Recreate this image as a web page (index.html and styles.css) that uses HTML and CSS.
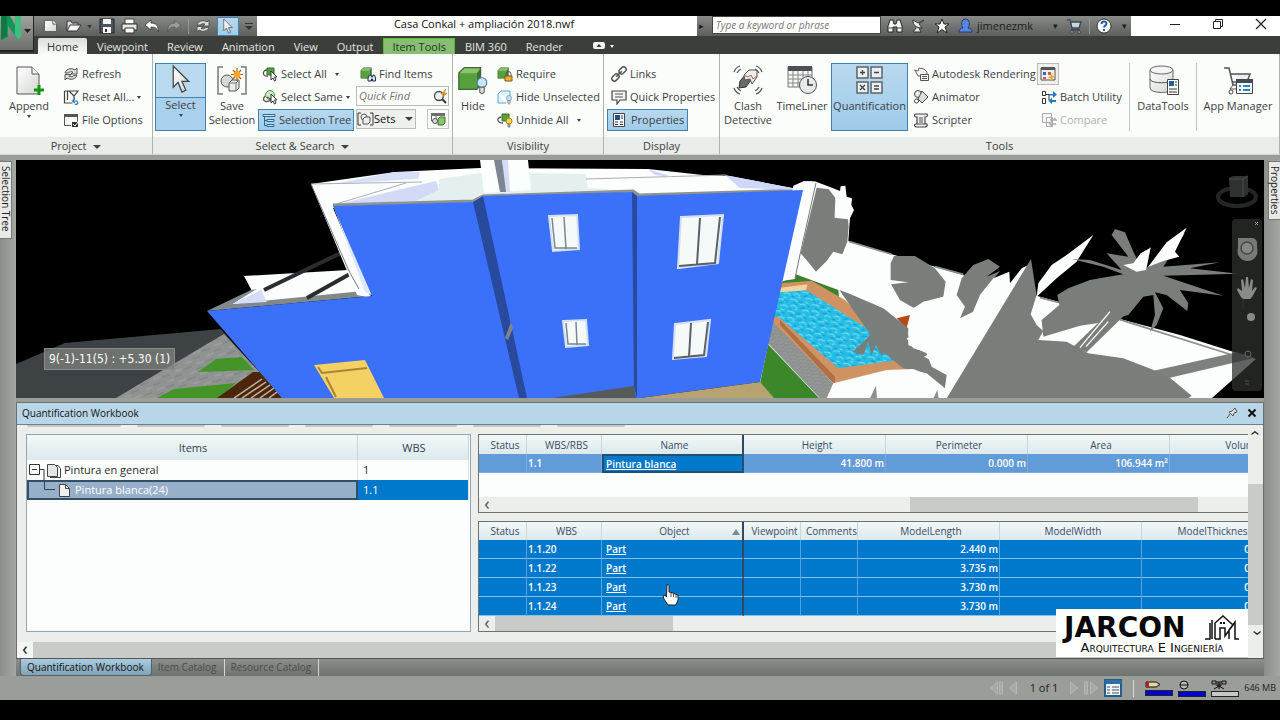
FILE: index.html
```html
<!DOCTYPE html>
<html lang="en">
<head>
<meta charset="utf-8">
<title>Casa Conkal + ampliación 2018.nwf</title>
<link rel="stylesheet" href="styles.css">
</head>
<body>
<svg class="defs" aria-hidden="true">
  <defs>
    <linearGradient id="gGreen" x1="0" y1="0" x2="1" y2="1"><stop offset="0" stop-color="#6fae4f"/><stop offset="1" stop-color="#4a9430"/></linearGradient>
    <linearGradient id="gPage" x1="0" y1="0" x2="1" y2="1"><stop offset="0" stop-color="#fff"/><stop offset="1" stop-color="#d3d6d3"/></linearGradient>
    <symbol id="refresh" viewBox="0 0 16 16"><path d="M2 7a6 5 0 0 1 10-3l2-2v6H8l2-2a4 3 0 0 0-5 1z M14 9a6 5 0 0 1-10 3l-2 2V8.500h6l-2 2a4 3 0 0 0 5-1z" fill="#dfe2df" stroke="#555" stroke-width="1"/></symbol>
    <symbol id="page" viewBox="0 0 16 16"><path d="M1.500 2.500h9l4 4v8h-13z" fill="url(#gPage)" stroke="#555"/><path d="M10.500 2.500v4h4" fill="#fff" stroke="#555"/></symbol>
    <symbol id="cube" viewBox="0 0 16 16"><path d="M1 5l3-3h9l-2 3z" fill="#8cc46c"/><path d="M1 5h10v9H1z" fill="#57a13c"/><path d="M11 5l2-3v9l-2 3z" fill="#39752a"/><path d="M1 5l3-3h9v9l-2 3H1z" fill="none" stroke="#42643a" stroke-width=".7"/></symbol>
    <symbol id="cursor" viewBox="0 0 20 32"><path d="M2 2v22l5-5 4 10 4-2-4-9h7z" fill="url(#gPage)" stroke="#444" stroke-width="1.300"/></symbol>
    <symbol id="cart" viewBox="0 0 16 16"><path d="M1 2h3l2 8h7l2-6H5M5 12h9" fill="#c9d4dc" stroke="#394957" stroke-width="1.400"/><circle cx="6" cy="14" r="1.300" fill="#eee" stroke="#333"/><circle cx="13" cy="14" r="1.300" fill="#eee" stroke="#333"/></symbol>
    <symbol id="bulb" viewBox="0 0 10 16"><circle cx="5" cy="5" r="4.300" fill="#c7e4f8" stroke="#4f81ab"/><path d="M3 9h4v4.500l-2 1.500-2-1.500z" fill="#ddd" stroke="#666"/></symbol>
    <pattern id="water" width="67" height="37" patternUnits="userSpaceOnUse" patternTransform="rotate(14)"><rect width="67" height="37" fill="#27bde4"/><path d="M0 6l15-3 9 5M30 14l14-4 12 5M5 24l13-3 9 5M44 30l12-4 9 4M46 3l10 2M20 33l9-3" stroke="#79e2f4" fill="none" stroke-width="3"/><path d="M12 13l12 4M36 24l13-3M50 12l12 2M3 32l9 2M28 4l11 2" stroke="#1197ca" fill="none" stroke-width="3"/></pattern>
    <pattern id="stone" width="23" height="11" patternUnits="userSpaceOnUse" patternTransform="rotate(-20)"><rect width="23" height="11" fill="#8f9391"/><path d="M0 3h9M12 7h8" stroke="#7a7f7c"/><path d="M4 9h7M14 2h8" stroke="#a5a8a5"/></pattern>
  </defs>
</svg>

<div class="app">
  <header class="top">
    <button class="logo" aria-label="Application menu"><svg width="34" height="35" viewBox="0 0 34 35"><path d="M1 0h9l5 9V0h6v21l-3 3L8 10v11l-7 3z" fill="#159557"/><path d="M1 0h6v20l-6 4z" fill="#0c7a43"/><path d="M15 0h6v21l-3 3-3-5z" fill="#3fbf7f"/><path d="M24 13h7l-3.500 4z" fill="#1d1f1d"/></svg></button>
    <div class="top-rows">
      <div class="titlebar">
        <div class="qat">
          <button aria-label="New"><svg width="17" height="16"><use href="#page" width="17" height="15"/></svg></button>
          <button aria-label="Open"><svg width="28" height="16" viewBox="0 0 28 16"><path d="M2 13V3h4l1 2h6v2" fill="#ddd" stroke="#333"/><path d="M2 13l3-6h11l-4 6z" fill="#f6f6f6" stroke="#333"/><path d="M22 7h5l-2.500 3z" fill="#333"/></svg></button>
          <button aria-label="Save"><svg width="16" height="16" viewBox="0 0 16 16"><path d="M1 1h14v14H1z" fill="#4b5560" stroke="#222"/><path d="M4 1h8v5H4zM4 9h8v6H4z" fill="#f4f4f4"/><path d="M6 11h2v3H6z" fill="#333"/></svg></button>
          <button aria-label="Print"><svg width="17" height="16" viewBox="0 0 17 16"><path d="M4 1h9v5H4z" fill="#fff" stroke="#444"/><path d="M1 6h15v6H1z" fill="#e8e8e8" stroke="#333"/><path d="M4 10h9v5H4z" fill="#fff" stroke="#333"/></svg></button>
          <button aria-label="Undo"><svg width="16" height="16" viewBox="0 0 16 16"><path d="M1 7l6-5v3c5 0 8 3 7 9-1-4-3-5-7-5v3z" fill="#fff" stroke="#333" stroke-width=".8"/></svg></button>
          <button aria-label="Redo"><svg width="16" height="16" viewBox="0 0 16 16"><path d="M15 7L9 2v3c-5 0-8 3-7 9 1-4 3-5 7-5v3z" fill="#999c99" stroke="#555" stroke-width=".8"/></svg></button>
          <i class="bar-sep"></i>
          <button aria-label="Refresh"><svg width="16" height="16"><use href="#refresh"/></svg></button>
          <button class="on" aria-label="Select"><svg width="12" height="17"><use href="#cursor"/></svg></button>
          <button aria-label="Customize"><svg width="8" height="16" viewBox="0 0 8 16"><path d="M0 5h8v1H0zM0 8h8l-4 4z" fill="#333"/></svg></button>
        </div>
        <h1>Casa Conkal + ampliación 2018.nwf</h1>
        <div class="info">
          <span class="arrow">▸</span>
          <input type="text" aria-label="Search help" placeholder="Type a keyword or phrase">
          <button aria-label="Search"><svg width="16" height="16" viewBox="0 0 16 16"><path d="M1 14V8l2-6h3l1 4h2l1-4h3l2 6v6h-5V9H6v5z" fill="#f4f4f4" stroke="#222"/><path d="M1.500 10h4M10.500 10h4" stroke="#444"/></svg></button>
          <button aria-label="Communication"><svg width="16" height="16" viewBox="0 0 16 16"><path d="M3 2c0 5 3 8 9 8l-3-4 5-4-6 3z" fill="#f4f4f4" stroke="#333"/><path d="M6 10l-3 4h8l-2-4" fill="#ddd" stroke="#333"/></svg></button>
          <button aria-label="Favorites"><svg width="16" height="16" viewBox="0 0 16 16"><path d="M8 1l2 5h5l-4 3 2 6-5-3.500L3 15l2-6-4-3h5z" fill="#fff" stroke="#222"/></svg></button>
          <button class="user"><svg width="15" height="16" viewBox="0 0 15 16"><path d="M1 14c0-3 2-4 4-4-2-3-2-9 2.500-9s4.500 6 2.500 9c2 0 4 1 4 4z" fill="#5b86dd" stroke="#1f3c80"/></svg>jimenezmk</button>
          <span class="arrow user-arrow">▾</span>
          <button aria-label="Store"><svg width="16" height="16"><use href="#cart"/></svg></button>
          <i class="bar-sep"></i>
          <button aria-label="Help"><svg width="16" height="16" viewBox="0 0 16 16"><circle cx="8" cy="8" r="7" fill="#fff" stroke="#333"/><path d="M5.500 6c0-3.500 5-3.300 5-.4 0 1.900-2.500 2-2.500 3.900M8 11v2" stroke="#1f5f9f" stroke-width="2" fill="none"/></svg></button>
          <span class="arrow">▾</span>
        </div>
        <div class="win">
          <button aria-label="Minimize"><svg width="12" height="12" viewBox="0 0 12 12"><path d="M1 6.500h10" stroke="#222"/></svg></button>
          <button aria-label="Restore"><svg width="12" height="12" viewBox="0 0 12 12"><path d="M1.500 3.500h7v7h-7zM3.500 3.500v-2h7v7h-2" fill="none" stroke="#222"/></svg></button>
          <button aria-label="Close"><svg width="12" height="12" viewBox="0 0 12 12"><path d="M1 1l10 10M11 1L1 11" stroke="#222" stroke-width="1.200"/></svg></button>
        </div>
      </div>
      <nav class="tabs">
        <button class="active">Home</button><button>Viewpoint</button><button>Review</button><button>Animation</button><button>View</button><button>Output</button><button class="context">Item Tools</button><button>BIM 360</button><button>Render</button>
        <button class="mini" aria-label="Minimize ribbon"><svg width="22" height="10" viewBox="0 0 22 10"><rect y="1" width="12" height="7" rx="2" fill="#f2f2f2"/><path d="M3.500 6h5L6 3z" fill="#333"/><path d="M17 4h4l-2 3z" fill="#eee"/></svg></button>
      </nav>
    </div>
  </header>

  <div class="ribbon">
    <section class="panel project">
      <div class="body">
        <button class="big w-append"><svg width="32" height="32" viewBox="0 0 32 32"><path d="M4 3h15l7 7v20H4z" fill="url(#gPage)" stroke="#555"/><path d="M19 3v7h7" fill="#fff" stroke="#555"/><path d="M21 26h10M26 21v10" stroke="#149414" stroke-width="3"/></svg><span>Append</span><b class="dd"></b></button>
        <div class="col c-project">
          <button><svg width="16" height="16"><use href="#refresh"/></svg>Refresh</button>
          <button><svg width="16" height="16" viewBox="0 0 16 16"><path d="M1.500 2v12h8M1.500 2h3v9M6 2h9l-4 5zM11 7v3" fill="none" stroke="#444" stroke-width="1.200"/><path d="M10 12h4c2 3-1 4-2 3M12 9.500L9.500 12l2.500 2" fill="none" stroke="#2579c0" stroke-width="1.200"/></svg>Reset All...<b class="dd"></b></button>
          <button><svg width="16" height="16" viewBox="0 0 16 16"><path d="M1.500 2.500h13v7M1.500 2.500v11H8" fill="#f4f4f4" stroke="#555"/><path d="M1 2h14v3H1z" fill="#555"/><path d="M9 10h6v5H9z" fill="#333"/><path d="M10 12l2 2 4-5" stroke="#fff" fill="none"/></svg>File Options</button>
        </div>
      </div>
      <h2>Project <b class="dd wide"></b></h2>
    </section>

    <section class="panel search">
      <div class="body">
        <button class="big on split w-select"><svg width="20" height="31"><use href="#cursor"/></svg><span>Select</span><b class="dd"></b></button>
        <button class="big w-save"><svg width="32" height="32" viewBox="0 0 32 32"><path d="M7 3H2v27h5M25 3h5v27h-5" fill="none" stroke="#777" stroke-width="1.500"/><circle cx="11" cy="17" r="6" fill="#d5d8d5" stroke="#555"/><path d="M13 19l3-3h7v8l-3 3h-7z" fill="#e8ece8" stroke="#555"/><path d="M13 19h7l3-3M20 19v8" fill="none" stroke="#777"/><path d="M21 4v13M15 10.500h12M17 6l8 9M25 6l-8 9" stroke="#b95c00" stroke-width="1.200"/><circle cx="21" cy="10.500" r="3.300" fill="#f6a623"/></svg><span>Save<br>Selection</span></button>
        <div class="col c-select">
          <button><svg width="16" height="16" viewBox="0 0 16 16"><path d="M5 2h7v7H5z" fill="#57a13c" stroke="#35702a"/><path d="M5 4c-5 0-5 7 1 6" fill="none" stroke="#555" stroke-width="1.300"/><path d="M9 5v9l2-2 1.500 3 1.500-1-1.500-3H15z" fill="#fff" stroke="#333"/></svg>Select All<b class="dd gap"></b></button>
          <button><svg width="16" height="16" viewBox="0 0 16 16"><circle cx="8" cy="6" r="4.500" fill="#cfe5c8" stroke="#4b9a38"/><path d="M3 7c-4 5 1 7 6 4M5 8l5 3" fill="none" stroke="#555" stroke-width="1.300"/><path d="M9 5v9l2-2 1.500 3 1.500-1-1.500-3H15z" fill="#fff" stroke="#333"/></svg>Select Same<b class="dd"></b></button>
          <button class="on"><svg width="16" height="16" viewBox="0 0 16 16"><path d="M2 2.500h12v2H2zM6 7.500h7v2H6zM6 12.500h7v2H6z" fill="#cfe6f5" stroke="#286a94"/><path d="M3.500 5v8.500H6M3.500 8.500H6" fill="none" stroke="#286a94"/></svg>Selection Tree</button>
        </div>
        <div class="col c-find">
          <button><svg width="16" height="16"><use href="#cube" width="14" height="14"/><path d="M8 15v-3l1.500-3H11l.5 2h1l.5-2h1.500l1 3v3h-3v-2h-1v2z" fill="#dbe7f3" stroke="#1c2f45"/></svg>Find Items</button>
          <div class="field"><input type="text" aria-label="Quick Find" placeholder="Quick Find"><svg width="16" height="16" viewBox="0 0 16 16"><circle cx="7" cy="8" r="4.500" fill="#e5f3f3" stroke="#444" stroke-width="1.300"/><path d="M10 11l4 4" stroke="#333" stroke-width="2"/><path d="M14 1l-5 5h3l-2 4 5-5h-3z" fill="#f7a81b" stroke="#b87510" stroke-width=".5"/></svg></div>
          <div class="sets"><label class="combo"><svg width="17" height="16" viewBox="0 0 17 16"><path d="M4 2H1v12h3M13 2h3v12h-3" fill="none" stroke="#333"/><circle cx="7" cy="6" r="3" fill="#eee" stroke="#555"/><path d="M6 8l2-2h5v5l-2 2H6z" fill="#eee" stroke="#555"/></svg><select aria-label="Sets"><option>Sets</option></select><b class="dd wide"></b></label><button class="mini-btn" aria-label="Manage sets"><svg width="16" height="16" viewBox="0 0 16 16"><path d="M1 2h14v3H1z" fill="#6a706a"/><path d="M1.500 5v5h6M6 5v8" fill="none" stroke="#666"/><path d="M8 8l2-2h5v6l-2 2H8z" fill="#8cc46c" stroke="#387529"/><circle cx="5" cy="10" r="2.500" fill="#ddd" stroke="#555"/></svg></button></div>
        </div>
      </div>
      <h2>Select &amp; Search <b class="dd wide"></b></h2>
    </section>

    <section class="panel visibility">
      <div class="body">
        <button class="big w-hide"><svg width="32" height="32" viewBox="0 0 32 32"><use href="#cube" width="29" height="29"/><use href="#bulb" x="19" y="13" width="12" height="18"/></svg><span>Hide</span></button>
        <div class="col c-vis">
          <button><svg width="16" height="16"><use href="#cube" width="14" height="14"/><path d="M9 10V8a2.500 2.500 0 0 1 5 0v2" fill="none" stroke="#555"/><path d="M8 10h7v5H8z" fill="#efae31" stroke="#85560b"/></svg>Require</button>
          <button><svg width="16" height="16" viewBox="0 0 16 16"><path d="M1 5l3-3h9v7M1 5v9h8" fill="#e2f3fb" stroke="#5ba7cf"/><use href="#bulb" x="9" y="6" width="6" height="10"/></svg>Hide Unselected</button>
          <button><svg width="16" height="16" viewBox="0 0 16 16"><path d="M5 2h7v7H5z" fill="#57a13c" stroke="#35702a"/><path d="M4 5c-5 1-4 6 2 6" fill="none" stroke="#555" stroke-width="1.300"/><circle cx="12" cy="9" r="3" fill="#fbd557" stroke="#b88412"/><path d="M11 12h2v3h-2z" fill="#bbb" stroke="#555" stroke-width=".6"/></svg>Unhide All<b class="dd gap"></b></button>
        </div>
      </div>
      <h2>Visibility</h2>
    </section>

    <section class="panel display">
      <div class="body">
        <div class="col c-disp">
          <button><svg width="16" height="16" viewBox="0 0 16 16"><g transform="rotate(-45 8 8)" fill="none" stroke="#555" stroke-width="1.500"><rect x="-1" y="5.500" width="8" height="5" rx="2.500"/><rect x="9" y="5.500" width="8" height="5" rx="2.500"/><path d="M4 8h8"/></g></svg>Links</button>
          <button><svg width="16" height="16" viewBox="0 0 16 16"><path d="M1 2h14v9H9l-3 4v-4H1z" fill="#f4f4f4" stroke="#444" stroke-width="1.200"/><path d="M4 5h8M4 8h8" stroke="#555"/></svg>Quick Properties</button>
          <button class="on fit"><svg width="16" height="16" viewBox="0 0 16 16"><path d="M2.500 1.500h11v13h-11z" fill="#fff" stroke="#444"/><path d="M4 3h5v5H4z" fill="#1f4f8f"/><path d="M10 4h2M10 6h2M4 10h3M9 10h3M4 12.500h3M9 12.500h3" stroke="#333"/></svg>Properties</button>
        </div>
      </div>
      <h2>Display</h2>
    </section>

    <section class="panel tools">
      <div class="body">
        <button class="big w-save"><svg width="32" height="32" viewBox="0 0 32 32"><path d="M8 17l6-7 7 1-2 5-5 7-7 1z" fill="#686d69" stroke="#333"/><path d="M12 11l5-5h8v7l-5 7-2-5-5 1z" fill="#eceeec" stroke="#555"/><path d="M12 11l4 2 3-2 2 4 4-3" fill="none" stroke="#b76248"/><path d="M2 8c1-3 3-5 6-6M5 9c1-2 2-3 4-4M24 2c3 1 5 3 6 6M23 5c2 1 3 2 4 4M2 24c1 3 3 5 6 6M5 23c1 2 2 3 4 4M30 24c-1 3-3 5-6 6M27 23c-1 2-2 3-4 4" fill="none" stroke="#555" stroke-width="1.300"/></svg><span>Clash<br>Detective</span></button>
        <button class="big w-time"><svg width="32" height="32" viewBox="0 0 32 32"><path d="M2 3h24v20H2z" fill="#f6f6f6" stroke="#777"/><path d="M2 2h24v5H2z" fill="#4b5157"/><path d="M2 11h24M2 15h24M2 19h24M7 7v16M12 7v16M17 7v16M22 7v16" stroke="#888"/><circle cx="22" cy="21" r="8.500" fill="#e7eaea" stroke="#555"/><path d="M22 15v6h5" fill="none" stroke="#333" stroke-width="1.500"/></svg><span>TimeLiner</span></button>
        <button class="big on w-quant"><svg width="32" height="32" viewBox="0 0 32 32"><path d="M3 3h11v11H3zM17 3h11v11H17zM3 18h11v11H3zM17 18h11v11H17z" fill="#edf0f0" stroke="#5b646a" stroke-width="1.500"/><path d="M6 8.500h5M8.500 6v5M20 8.500h5M6 21l5 5M11 21l-5 5M20 22h5M20 25h5" stroke="#444" stroke-width="1.300"/></svg><span>Quantification</span></button>
        <div class="col c-tools">
          <button><svg width="16" height="16" viewBox="0 0 16 16"><path d="M1 4l4 1 1-3 5 1 3 3v3M2 4l3 6h3" fill="#eee" stroke="#666"/><path d="M7.500 8.500h8v6h-8zM9 10.500h5M9 12.500h5" fill="#f8f8f8" stroke="#555"/></svg>Autodesk Rendering</button>
          <button><svg width="16" height="16" viewBox="0 0 16 16"><circle cx="5" cy="5" r="3.500" fill="#eee" stroke="#444"/><path d="M9 2l6 6-6 6-4-4z" fill="#ddd" stroke="#444"/><circle cx="3.500" cy="12" r="2" fill="#fff" stroke="#444"/></svg>Animator</button>
          <button><svg width="16" height="16" viewBox="0 0 16 16"><path d="M3 2h11c1 2 0 3-2 3v7h2c1 2-1 3-2 3H3c-2-1-2-3 0-3h1V5H3c-2 0-2-3 0-3z" fill="#eee" stroke="#444" stroke-width="1.200"/><path d="M6 6h4M6 8h4M6 10h4M4 12h8" stroke="#555"/></svg>Scripter</button>
        </div>
        <div class="col c-batch">
          <button class="framed" aria-label="Appearance Profiler"><svg width="16" height="16" viewBox="0 0 16 16"><path d="M1 2h14v12H1z" fill="#eee" stroke="#555"/><path d="M1 1h14v3H1z" fill="#555"/><path d="M3 6h3v3H3z" fill="#3269b4"/><path d="M8 6h3v3H8z" fill="#d35a43"/><path d="M3 11h3v2H3z" fill="#d35a43"/><path d="M13 7l-5 5h3l-1 3 5-5h-3z" fill="#f7a81b"/></svg></button>
          <button><svg width="16" height="16" viewBox="0 0 16 16"><path d="M1.500 2.500h3v4h-3zM1.500 9.500h3v5h-3zM5 5.500h3v6" fill="#fff" stroke="#333"/><path d="M8 5h4V2l4 3.500L12 9V6.500H8zM15 11h-4V8.500L7.500 12l3.500 3v-2h4z" fill="#2579b8"/></svg>Batch Utility</button>
          <button disabled><svg width="16" height="16" viewBox="0 0 16 16"><path d="M1.500 1.500h9v9h-9zM5.500 5.500h6v9h-6z" fill="#f6f6f6" stroke="#aaa"/><path d="M9 8h6l-2-2M15 12H9l2 2" fill="none" stroke="#aaa" stroke-width="1.500"/></svg>Compare</button>
        </div>
        <i class="vsep"></i>
        <button class="big w-data"><svg width="32" height="32" viewBox="0 0 32 32"><path d="M3 6v18c0 6 23 6 23 0V6z" fill="url(#gPage)" stroke="#666"/><ellipse cx="14.500" cy="6" rx="11.500" ry="4" fill="#f4f4f4" stroke="#666"/><path d="M3 15c0 5 23 5 23 0" fill="none" stroke="#555"/><path d="M20.500 15.500h11v15h-11z" fill="#fff" stroke="#444"/><path d="M22 17h5v5h-5z" fill="#225f9f"/><path d="M28 18h2M28 21h2M22 25h8M22 28h8" stroke="#333"/></svg><span>DataTools</span></button>
        <i class="vsep"></i>
        <button class="big w-app"><svg width="32" height="32" viewBox="0 0 32 32"><path d="M2 4h5l4 17h16M8 10h20l-3 8H10" fill="#eceeec" stroke="#555" stroke-width="1.500"/><path d="M11 21l-3 4h6" fill="none" stroke="#555"/><circle cx="9" cy="28" r="2" fill="#fff" stroke="#444"/><path d="M14.500 15.500h16v14h-16z" fill="#fff" stroke="#444"/><path d="M14 15h17v4H14z" fill="#3f4a56"/><path d="M17 22h2M21 22h7M17 26h2M21 26h7" stroke="#2b86c8" stroke-width="2"/></svg><span>App Manager</span></button>
      </div>
      <h2>Tools</h2>
    </section>
  </div>

  <div class="workspace">
    <aside class="rail left"><button>Selection Tree</button></aside>
    <main class="center">
      <div class="viewport">
        <svg class="scene" viewBox="16 160 1248 238" preserveAspectRatio="xMidYMid slice" role="img" aria-label="3D model of the house">
          <rect x="-2000" y="0" width="6000" height="900" fill="#000"/>
          <path d="M16 364l49-21 156-14 60 69H16z" fill="#3d4344"/>
          <path d="M116 398l108-64 60 64z" fill="url(#stone)"/>
          <path d="M198 372l18-13 26-2 12 13zM157 398l17-9 62-6-18 15z" fill="#449528"/>
          <path d="M217 398l36-26h10l19 26z" fill="#4b260b"/>
          <path d="M234 398l28-19M242 398l24-16M251 398l19-13M260 398l14-10M269 398l8-6" stroke="#c4b8a7" stroke-width="1.500"/>
          <path d="M244 276l104-6 24 25-146 13 26-17z" fill="#fbfefd"/>
          <path d="M207 311l44-21 6-1-25 15 141-14-2 6z" fill="#82898a"/>
          <path d="M232 304l29-14 6 12z" fill="#d4dcf8"/>
          <path d="M264 290l83-40M307 298l50-28" stroke="#292d30" stroke-width="4"/>
          <path d="M311 184l84-12 85-4 168 1 55 6 26 1 74 14-166 6-155 3-9 4-140 5 38 90-14-3z" fill="#fbfefd"/>
          <path d="M333 184l62-12h25l-2 7z" fill="#d9dff8"/>
          <path d="M333 205l4-1 36 91-8-3z" fill="#dce8ff"/>
          <path d="M334 205l102-24 3 9-22 11z" fill="#d3daf6"/>
          <path d="M439 179l49-7 98 2 2 14 48 3-152 4-11 5-57 1 23-11z" fill="#e3f0ef"/>
          <path d="M333 205l73-22M586 179l140-4M311 184l111-2" stroke="#a9afb3" fill="none"/>
          <path d="M333 205l140-4 10-5 150-5 6 4 164-5" stroke="#8e9390" stroke-width="3" fill="none"/>
          <path d="M311 184l38 87 10 18" stroke="#777b80" fill="none"/>
          <path d="M725 175l15 13 62 2zM648 169l25 8-18-2z" fill="#d0d8f8"/>
          <path d="M480 160h48l3 30-47 3z" fill="#fafefd"/><path d="M494 160h8l6 32h-8z" fill="#7d8492"/><path d="M502 160h6l2 32h-4z" fill="#d5dcf6"/>
          <g transform="translate(780 155) scale(.3333)">
            <path d="M40 92L72 78 108 80 150 96 180 108 182 94 196 92 200 125 216 130 214 150 222 165 210 190 205 258 335 298 465 335 590 372 780 425 1020 492 1200 540 1428 612 1295 730H-60V600z" fill="#fbfefd"/>
            <path d="M208 260L335 298M465 335L550 358M780 428L845 445M1020 494L1350 598" stroke="#8a8e8b" stroke-width="5" fill="none"/>
            <path d="M0 385L45 357 175 405 178 440z" fill="#3c812a"/>
            <path d="M-40 520L0 385 95 377 195 435 405 645 170 690z" fill="#cf9262"/><path d="M0 398L82 388 78 408 0 414z" fill="#f0d49c"/><path d="M0 510L165 690V665L0 495z" fill="#ae7147"/>
            <path d="M0 412L80 406 273 528 353 616 175 640 0 490-30 476z" fill="url(#water)"/>
            <path d="M-22 500L165 690 140 730H120L-36 565z" fill="url(#stone)"/><path d="M-36 568L118 730H-20L-60 685z" fill="#3d872b"/>
            <path d="M110 98L146 103 166 128 164 188 204 193 206 215 202 260 187 298 160 290 140 318 108 350 85 322 62 295z" fill="#797e7b"/>
            <path d="M70 95L80 78 108 80 45 372 -10 380z" fill="#fbfefd"/><path d="M108 84L62 290 45 370" stroke="#777" stroke-width="3" fill="none"/>
            <path d="M350 490L390 480 380 520z" fill="#b44a16"/><path d="M250 500L264 478 270 506z" fill="#d98a53"/>
            <path d="M178 405L205 415 310 460 385 520 385 570 440 595 455 635 500 660 495 700 440 655 370 640 310 592 303 602 288 570 274 600 265 560 250 600 218 590 272 540 230 480z" fill="#797e7b"/>
            <path d="M332 375L332 325 342 303 405 303 465 340 497 380 490 425 400 458 360 435 333 388 385 382z" fill="#797e7b"/>
            <path d="M392 465L430 440 490 425 555 458 540 500 520 560 490 590 500 640 470 625 432 605 490 572 440 592 400 580 380 550 440 525 385 540z" fill="#fbfefd"/>
            <path d="M140 730L160 685 320 645 400 642 445 660 475 700 480 730z" fill="#fbfefd"/><path d="M270 730L288 692 291 730zM460 730L472 705 476 730z" fill="#8b908d"/>
            <path d="M530 420L545 370 580 330 625 312 660 335 620 365 660 348 610 410 580 470 540 490 555 455z" fill="#797e7b"/>
            <path d="M495 700L545 495 575 480 600 420 640 370 688 350 690 385 725 340 745 330 500 730z" fill="#fbfefd"/>
            <path d="M500 730L753 312 770 420 752 478 770 510 790 528 775 555 860 560 925 595 1030 610 1160 660 1235 722 1225 730z" fill="#797e7b"/>
            <path d="M770 425L775 385 815 330 860 300 940 240 890 320 830 370z" fill="#fbfefd"/>
            <path d="M785 495L838 450 832 420 865 400 930 375 985 365 1030 358 970 335 875 312 930 315 1025 345 980 295 1045 305 995 240 1005 222 1035 232 1060 290 1075 320 1112 275 1100 340 1170 260 1215 235 1150 335 1320 322 1230 340 1375 356 1150 362 1330 422 1200 405 1225 445 1222 468 1160 420 1125 412 1150 460 1130 510 1110 530 1125 480 1120 420 1090 425 1045 480 950 505 900 512 790 545z" fill="#797e7b"/>
            <path d="M1105 335L1160 262 1220 218 1185 290 1198 305 1150 318zM1030 330L1060 325 1082 295 1112 278 1098 345 1070 350z" fill="#fbfefd"/>
            <path d="M880 575L995 465 1040 475 920 592z" fill="#797e7b"/><path d="M900 578L990 470M918 575L985 500" stroke="#fbfefd" stroke-width="4"/>
            <path d="M1118 648L1370 592 1425 608 1170 668z" fill="#7c817e"/>
          </g>
          <path d="M207 311l165-15-39-90 141-4 10-6 148-4 6 4 165-6-43 192-120 16H282z" fill="#3b70f8"/>
          <path d="M473 202l10-6 44 202h-8zM632 192l5 4v202l-3-12z" fill="#29499c"/>
          <path d="M505 338l6-16 2 6-5 12z" fill="#7c858a"/>
          <path d="M552 398l82-12 2 12z" fill="#555b5b"/><path d="M640 398l120-16 14 16z" fill="#b7a272"/>
          <path d="M314 365l51-5 19 38h-50z" fill="#f5d063"/><path d="M318 367l4 6 45-5M326 377l10 20" fill="none" stroke="#a88436" stroke-width="2"/>
          <g fill="#f5faf9" stroke="#d4dfef" stroke-width="2"><path d="M549 216l28-1 2 34-26 2zM563 321l23-1 2 25-22 2zM681 217l42-2-5 48-40 5zM675 324l35-4-4 36-33 3z"/></g>
          <path d="M564 217l2 32M552 218l3 30h22M576 322l1 23M566 323l2 21h18" fill="none" stroke="#7a8790" stroke-width="1.500"/>
          <path d="M700 218l-3 46M720 217l-5 46-36 3M691 323l-2 34M708 322l-4 33-30 3" fill="none" stroke="#596169" stroke-width="2"/>
        </svg>
        <span class="location">9(-1)-11(5) : +5.30 (1)</span>
        <svg class="viewcube" width="46" height="36" viewBox="0 0 46 36"><ellipse cx="23" cy="22" rx="19" ry="9" fill="none" stroke="#242726" stroke-width="4"/><path d="M15 3l4-2h15v18l-4 3H16z" fill="#2f3231"/><path d="M15 4h14v18M29 4l5-3" fill="none" stroke="#4a4d4b"/></svg>
        <div class="navbar"><svg width="30" height="172" viewBox="0 0 30 172"><path d="M23 3l3 3M26 3l-3 3" stroke="#999"/><path d="M6 19h14a5 5 0 0 1 5 5v5a10 10 0 1 1-19 0z" fill="#777b78"/><circle cx="15" cy="29" r="6" fill="#858986" stroke="#454846" stroke-width="1.500"/><path d="M9 78l-4-7 1-2 4 3-1-11 2-1 2 9 1-11 2 0 1 11 2-9 2 1-1 11 3-4 2 1-5 9-2 2H11z" fill="#888c89"/><circle cx="19" cy="98" r="4" fill="#888c89"/><path d="M11 80v10" stroke="#333"/><circle cx="16" cy="135" r="3" fill="none" stroke="#656967"/><path d="M13 162h4M13 165h4" stroke="#4d504e"/></svg></div>
      </div>

      <section class="workbook">
        <div class="wb-title"><h2>Quantification Workbook</h2><button aria-label="Auto hide"><svg width="12" height="12" viewBox="0 0 12 12"><path d="M1 11l3-4M3 5l4 4 1-3 3-1-2-4-3 3z" fill="#ddd" stroke="#555"/></svg></button><button aria-label="Close"><svg width="10" height="10" viewBox="0 0 10 10"><path d="M1.500 1.500l7 7M8.500 1.500l-7 7" stroke="#111" stroke-width="2"/></svg></button></div>
        <div class="wb-main">
          <div class="wb-content">
            <div class="wb-strip"><i></i><i></i><i></i><i></i><i></i><i></i><i></i></div>
            <div class="wb-grids">
              <div class="tree">
                <table>
                  <colgroup><col><col class="k-wbs"></colgroup>
                  <thead><tr><th>Items</th><th>WBS</th></tr></thead>
                  <tbody>
                    <tr><td><span class="node"><svg width="36" height="20" viewBox="0 0 36 20"><path d="M2.500 4.500h10v10h-10zM5 9.500h5M13 9.500h4V20" fill="none" stroke="#333"/><path d="M20.500 4.500h7l3 3v9h-10z" fill="#e4e7e4" stroke="#444"/><path d="M28 5.500h3l2.500 3v9H23" fill="none" stroke="#444"/></svg>Pintura en general</span></td><td>1</td></tr>
                    <tr class="sel"><td><span class="node"><svg width="45" height="18" viewBox="0 0 45 18"><path d="M15.500 0v8.500H26" fill="none" stroke="#2a4553"/><path d="M30.500 3.500h6l4 4v8h-10z" fill="#eef1ee" stroke="#444"/><path d="M36.500 3.500v4h4" fill="none" stroke="#444"/></svg>Pintura blanca(24)</span></td><td>1.1</td></tr>
                  </tbody>
                </table>
              </div>
              <div class="grids">
                <div class="grid">
                  <table class="summary">
                    <colgroup><col class="k-status"><col class="k-code"><col class="k-val"><col class="k-val"><col class="k-val"><col class="k-val"><col class="k-val"></colgroup>
                    <thead><tr><th>Status</th><th>WBS/RBS</th><th>Name</th><th>Height</th><th>Perimeter</th><th>Area</th><th>Volume</th></tr></thead>
                    <tbody><tr><td></td><td>1.1</td><td class="focus"><a href="#">Pintura blanca</a></td><td class="num">41.800 m</td><td class="num">0.000 m</td><td class="num">106.944 m²</td><td></td></tr></tbody>
                  </table>
                  <div class="hscroll"><span class="chev">‹</span><i class="sp-a"></i><i class="thumb th-a"></i></div>
                </div>
                <div class="grid">
                  <table class="objects">
                    <colgroup><col class="k-status"><col class="k-code"><col class="k-val"><col class="k-view"><col class="k-view"><col class="k-val"><col class="k-val"><col class="k-val"></colgroup>
                    <thead><tr><th>Status</th><th>WBS</th><th class="sorted">Object</th><th>Viewpoint</th><th>Comments</th><th>ModelLength</th><th>ModelWidth</th><th>ModelThickness</th></tr></thead>
                    <tbody>
                      <tr><td></td><td>1.1.20</td><td><a href="#">Part</a></td><td></td><td></td><td class="num">2.440 m</td><td></td><td class="num">0.150 m</td></tr>
                      <tr><td></td><td>1.1.22</td><td><a href="#">Part</a></td><td></td><td></td><td class="num">3.735 m</td><td></td><td class="num">0.150 m</td></tr>
                      <tr><td></td><td>1.1.23</td><td><a href="#">Part</a></td><td></td><td></td><td class="num">3.730 m</td><td></td><td class="num">0.150 m</td></tr>
                      <tr><td></td><td>1.1.24</td><td><a href="#">Part</a></td><td></td><td></td><td class="num">3.730 m</td><td></td><td class="num">0.150 m</td></tr>
                    </tbody>
                  </table>
                  <div class="hscroll"><span class="chev">‹</span><i class="thumb th-b"></i></div>
                  <svg class="hand" width="18" height="24" viewBox="0 0 18 24"><path d="M5 1.500c2 0 2 1 2 2V9l2 .5 2 .5 2 1 3 1v5l-2 5H6l-4-6-1-3 2-1 1.500 2z" fill="#fff" stroke="#222"/><path d="M9 10v4M11.500 11v3M14 12v3" stroke="#555"/></svg>
                </div>
              </div>
            </div>
            <div class="wb-hscroll"><span class="chev">‹</span><i></i></div>
            <div class="brand">
              <div><strong>JARCON</strong><svg width="36" height="28" viewBox="0 0 36 28"><path d="M1 25h5V9M8 25V6M11 25V9l8-7 10 9-3 4-5 7V14h-5v11H11M25 25V16l6-8v17h4" fill="none" stroke="#111" stroke-width="1.500"/><path d="M16 8h2v2h-2zM19 8h2v2h-2z" fill="#111"/></svg></div>
              <small>Arquitectura E Ingeniería</small>
            </div>
          </div>
          <div class="vscroll"><span class="chev up">‹</span><i class="thumb"></i><span class="chev down">‹</span></div>
        </div>
        <div class="wb-tabs"><button class="active">Quantification Workbook</button><button>Item Catalog</button><button>Resource Catalog</button></div>
      </section>
    </main>
    <aside class="rail right"><button>Properties</button></aside>
  </div>

  <footer class="status">
    <svg width="30" height="16" viewBox="0 0 30 16"><path d="M8.500 2v12l-7-6zM10.500 2h3v12h-3zM27.500 2v12l-7-6z" fill="#a6a9a4" stroke="#b4b7b2"/></svg>
    <span class="pages">1 of 1</span>
    <svg width="30" height="16" viewBox="0 0 30 16"><path d="M1.500 2v12l7-6zM15.500 2h3v12h-3zM21.500 2v12l7-6z" fill="#a6a9a4" stroke="#b4b7b2"/></svg>
    <button aria-label="Sheet browser"><svg width="18" height="18" viewBox="0 0 18 18"><path d="M1 1h16v16H1z" fill="#eef4f8" stroke="#255e8b" stroke-width="2"/><path d="M1 1h16v4H1z" fill="#2f70a4"/><path d="M3 8h3M8 8h7M3 11h3M8 11h7M3 14h3M8 14h7" stroke="#456"/></svg></button>
    <i class="st-sep"></i>
    <span class="meter"><svg width="16" height="9" viewBox="0 0 16 9"><path d="M1 2h10l4 2.500L11 7H1z" fill="#e3d89a" stroke="#111"/><path d="M1 2h3v5H1z" fill="#b52020"/></svg><i class="full"></i></span>
    <span class="meter"><svg width="12" height="10" viewBox="0 0 12 10"><circle cx="6" cy="5" r="4" fill="#b5b8b3" stroke="#111"/><path d="M2 5h8" stroke="#111"/></svg><i class="full"></i></span>
    <span class="meter"><svg width="16" height="10" viewBox="0 0 16 10"><path d="M1 1h4v3H1zM11 1h4v3h-4zM6 4h4v2H6zM5 2h6M8 2v7M3 9l5-3 5 3" fill="none" stroke="#111"/></svg><i></i></span>
    <span class="mem">646 MB</span>
  </footer>
</div>
</body>
</html>
```
FILE: styles.css
```css
* { box-sizing: border-box; }
body { margin: 0; background: #000; color: #3c4044; font: 11px/14px "Open Sans", "Noto Sans", sans-serif; }
button, input, select { font: inherit; color: inherit; margin: 0; padding: 0; border: 0; background: none; border-radius: 0; outline: 0; }
button { white-space: nowrap; }
h1, h2 { margin: 0; font: inherit; }
svg { display: block; flex: none; }
i { font-style: normal; }
.defs { position: absolute; width: 0; height: 0; }
.app { margin: 16px 0 20px; background: #9b9d98; }
.dd { width: 0; height: 0; border: 2px solid transparent; border-top: 3px solid #3c4044; border-bottom: 0; flex: none; }
.dd.wide { border-width: 4px 4px 0; display: inline-block; margin-left: 4px; vertical-align: middle; }
.on { background: linear-gradient(#b9d9ee, #9fcbea); border: 1px solid #4381ac; }

.top { display: flex; background: #3b3e3b; }
.logo { flex: none; width: 34px; height: 36px; background: linear-gradient(#a0a39f, #6c6f6c); border-right: 1px solid #222; border-bottom: 2px solid #222; overflow: hidden; }
.top-rows { flex: 1; min-width: 0; }
.titlebar { display: flex; height: 20px; background: #fff; }
.qat, .info { display: flex; align-items: center; background: linear-gradient(#878a87, #5c5f5c); flex: none; }
.qat { width: 223px; padding: 0 4px 0 8px; justify-content: space-between; }
.qat .on { padding: 0 4px; height: 19px; }
.bar-sep { width: 1px; height: 16px; background: #949794; }
.titlebar h1 { flex: 1; padding-left: 14px; text-align: center; color: #111; line-height: 16px; }
.info { width: 434px; padding-right: 2px; justify-content: space-between; color: #1c1e1c; }
.info input { width: 169px; height: 18px; padding: 0 3px; background: #fff; border: 1px solid #444; align-self: flex-start; font-size: 10px; }
.arrow { width: 9px; text-align: center; font-size: 9px; }
.user { display: flex; align-items: center; gap: 4px; }
.user-arrow { margin-left: 12px; }
.info button:not(.user) { width: 18px; }
.win { flex: none; width: 149px; display: flex; justify-content: space-between; padding: 0 13px 4px 38px; }
input::placeholder { color: #777; font-style: italic; opacity: 1; }
.tabs { display: flex; gap: 1px; height: 18px; padding: 2px 0 0 4px; color: #e4e6e3; line-height: 15px; }
.tabs button { padding: 0 9px; }
.tabs .active { background: linear-gradient(#dcdedb, #f8faf7); color: #333; border-radius: 2px 2px 0 0; }
.tabs .context { background: #86bf74; color: #24371f; border: 1px solid #52c02c; border-bottom: 0; padding: 0 8px; }
.tabs .mini { padding-left: 20px; }

.ribbon { display: flex; background: #fafdfa; border-bottom: 1px solid #d0d3cf; height: 101px; }
.panel { flex: none; display: flex; flex-direction: column; border-right: 1px solid #aeb1ad; }
.project { width: 153px; }
.search { width: 300px; }
.visibility { width: 151px; }
.display { width: 116px; }
.tools { flex: 1; }
.panel h2 { height: 17px; background: #e9ece8; text-align: center; line-height: 17px; }
.body { flex: 1; display: flex; gap: 1px; padding: 9px 1px 6px; }
.big { flex: none; height: 68px; display: flex; flex-direction: column; align-items: center; line-height: 14px; gap: 2px; padding-top: 1px; }
.big svg { margin-bottom: 1px; }
.big.split { background: linear-gradient(#b9d9ee 33px, #4381ac 33px, #4381ac 34px, #a9d0ec 34px); }
.big.on { padding-top: 0; }
.w-append { width: 56px; }
.w-select { width: 51px; }
.w-save { width: 50px; }
.w-hide { width: 38px; }
.w-time { width: 56px; }
.w-quant { width: 77px; }
.w-data { width: 64px; }
.w-app { flex: 1; min-width: 76px; }
.col { flex: none; display: grid; grid-template-rows: repeat(3, 22px); gap: 1px; justify-items: start; }
.col > button { display: flex; align-items: center; gap: 3px; padding: 0 4px; }
.col > button.on { padding: 0 2px; gap: 2px; }
.col > button.fit { padding: 0 3px; gap: 4px; }
.dd.gap { margin-left: 5px; }
.c-project { width: 92px; padding-left: 1px; }
.search .body { padding-left: 2px; }
.c-select { width: 97px; }
.c-find { width: 94px; }
.c-vis { width: 108px; }
.display .body { padding-left: 3px; }
.c-disp { width: 110px; }
.tools .body { padding-left: 3px; }
.c-tools { width: 127px; }
.c-batch { width: 91px; }
.field { display: flex; align-items: center; width: 93px; height: 20px; border: 1px solid #b8bbb8; }
.field input { flex: 1; min-width: 0; padding-left: 2px; }
.sets { display: flex; width: 93px; justify-content: space-between; }
.combo { display: flex; align-items: center; border: 1px solid #bbb; width: 60px; height: 20px; background: #eef0ed; }
.combo select { appearance: none; flex: 1; min-width: 0; color: #111; }
.combo .dd { margin: 0 2px 0 0; }
.mini-btn { border: 1px solid #c4c7c3; padding: 1px 2px; height: 20px; }
.col > .framed { border: 1px solid #c0b9ae; padding: 0 2px; background: #f0f0ec; }
.col > button:disabled { color: #aeb1ae; }
.vsep { width: 1px; background: #c2c5c1; height: 68px; }

.workspace { display: flex; padding-top: 5px; }
.rail { flex: none; width: 16px; background: linear-gradient(90deg, #8b8e89, #a5a7a2); }
.rail button { writing-mode: vertical-rl; background: #e8eae7; border: 1px solid #777; color: #222; width: 12px; font-size: 10px; line-height: 11px; text-align: left; }
.rail.left button { min-height: 78px; margin-top: 1px; border-left: 0; padding: 4px 0; }
.rail.right { padding-left: 4px; }
.rail.right button { min-height: 59px; margin-top: 1px; padding: 4px 0; border-right: 0; }
.center { flex: 1; min-width: 0; }
.viewport { position: relative; height: 238px; overflow: hidden; background: #000; }
.scene { width: 100%; height: 100%; }
.location { position: absolute; left: 28px; top: 188px; padding: 4px; height: 22px; background: rgba(125, 130, 126, .75); border: 1px solid #8a8e8a; color: #fff; font: 12px/13px "DejaVu Sans Condensed", "DejaVu Sans", sans-serif; white-space: nowrap; }
.viewcube { position: absolute; right: 4px; top: 15px; }
.navbar { position: absolute; right: 2px; top: 59px; background: rgba(45, 48, 46, .75); border-radius: 4px; }

.workbook { margin-top: 4px; border: 1px solid #6b6e6a; border-bottom: 0; color: #2a2d30; }
.wb-title { display: flex; align-items: center; height: 22px; padding: 0 6px 2px 5px; background: #b9d6e8; border-bottom: 1px solid #70808a; gap: 9px; color: #111; font-size: 10px; }
.wb-title h2 { flex: 1; }
.wb-main { display: flex; background: #eceeeb; }
.wb-content { flex: 1; min-width: 0; position: relative; }
.wb-strip { display: flex; gap: 16px; height: 9px; padding-left: 10px; }
.wb-strip i { height: 2px; width: 68px; background: #c4c7c3; border-radius: 0 0 4px 4px; }
.wb-strip i:first-child { width: 94px; }
.wb-grids { display: flex; gap: 7px; padding-left: 9px; height: 198px; }
.tree { flex: none; width: 445px; background: #fbfefd; border: 1px solid #8fa5b5; }
table { border-collapse: separate; border-spacing: 0; table-layout: fixed; }
th, td { padding: 0; white-space: nowrap; overflow: hidden; font-weight: normal; }
th { background: linear-gradient(#f2f8f8, #dce9ed); color: #39444e; border-right: 1px solid #c8d6dc; }
.tree table { width: 442px; }
.tree th { height: 25px; color: #2f3e48; padding-left: 2px; }
.k-wbs { width: 111px; }
.tree td { height: 20px; padding-left: 5px; border-right: 1px solid #dde5e5; }
.tree td:first-child { padding: 0; }
.node { display: flex; align-items: center; gap: 1px; height: 20px; }
.sel { color: #fff; }
.sel td { background: #0079cc; }
.sel td:first-child { background: #97afc9; border: 2px solid #2f5163; }
.sel .node { height: 16px; }
.grids { flex: 1; min-width: 0; display: flex; flex-direction: column; gap: 8px; }
.grid { position: relative; border: 1px solid #6f7370; border-right: 0; background: #fbfefd; overflow: hidden; display: flex; flex-direction: column; font-size: 10px; }
.grid:first-child { height: 79px; }
.grid:last-child { flex: 1; }
.grid table { color: #fff; flex: none; }
.summary { width: 832px; }
.objects { width: 804px; }
.k-status { width: 48px; }
.k-code { width: 75px; }
.k-val { width: 142px; }
.k-view { width: 57px; }
.grid th { height: 19px; padding-left: 5px; line-height: 14px; color: #3c4c62; }
.grid td { height: 19px; padding-left: 1px; line-height: 14px; background: #0079cc; border-right: 1px solid #4fa6dd; border-bottom: 1px solid #7fc3ec; font-weight: 600; }
.summary td { background: #619bd8; border-color: #78abdf; }
.grid th:nth-child(3), .grid td:nth-child(3) { border-right: 2px solid #33485a; }
.grid td:nth-child(3) { padding-left: 4px; }
.summary td.focus { background: #0079cc; border: 2px solid #24506f; padding-left: 2px; }
.grid a { color: #fff; }
.grid .num { text-align: right; padding-right: 1px; }
.objects th { height: 18px; }
.sorted::after { content: ""; float: right; margin: 5px 2px 0 -10px; border: 4px solid transparent; border-top: 0; border-bottom: 6px solid #7c8890; }
.hscroll { display: flex; height: 15px; margin-top: auto; background: #eceeeb; flex: none; }
.chev { width: 16px; flex: none; text-align: center; font-size: 18px; line-height: 12px; color: #555; }
.thumb { background: #c8cbc7; }
.sp-a { flex: 0 0 415px; }
.th-a { flex: 0 0 288px; }
.th-b { flex: 0 0 178px; }
.hand { position: absolute; left: 183px; top: 61px; }
.wb-hscroll { display: flex; height: 16px; margin-top: 10px; }
.wb-hscroll .chev { background: #f5f7f4; color: #111; }
.wb-hscroll i { flex: 1; background: #c8cbc7; }
.vscroll { width: 15px; flex: none; display: flex; flex-direction: column; background: #eceeeb; }
.vscroll .thumb { flex: 1; margin-top: 43px; }
.vscroll .chev { width: 15px; height: 16px; line-height: 14px; color: #222; }
.chev.up { transform: rotate(90deg); }
.chev.down { transform: rotate(-90deg); margin-bottom: 17px; }
.brand { position: absolute; right: 0; bottom: 1px; width: 192px; height: 48px; background: #fff; color: #080808; text-align: center; padding: 5px 8px 0; }
.brand div { display: flex; justify-content: space-between; align-items: center; height: 28px; }
.brand strong { font: bold 28px/28px "DejaVu Sans", sans-serif; }
.brand small { display: block; font: 13px/12px "DejaVu Sans", sans-serif; font-variant: small-caps; white-space: nowrap; }
.wb-tabs { display: flex; align-items: flex-start; height: 18px; margin: 0 -1px; padding-left: 4px; background: linear-gradient(#8b8e8a, #6f736f); border-top: 1px solid #555; color: #4a4d4a; font-size: 10px; }
.wb-tabs button { padding: 0 7px 0 6px; height: 17px; border-right: 1px solid #d5d7d4; line-height: 15px; }
.wb-tabs .active { background: linear-gradient(#a8cbdf, #82a3b5); color: #111; border: 1px solid #4e6470; border-top: 0; border-radius: 0 0 4px 4px; }

.status { display: flex; align-items: center; justify-content: flex-end; height: 24px; padding-right: 4px; color: #222; gap: 5px; }
.pages { padding: 0 6px; }
.st-sep { width: 1px; height: 17px; background: #d8dad5; margin: 0 6px; }
.meter { display: grid; justify-items: start; gap: 1px; }
.meter i { width: 28px; height: 6px; border: 1px solid #222; background: #c5c8c4; }
.meter .full { background: #0000d0; }
.mem { font-size: 9px; }
```
